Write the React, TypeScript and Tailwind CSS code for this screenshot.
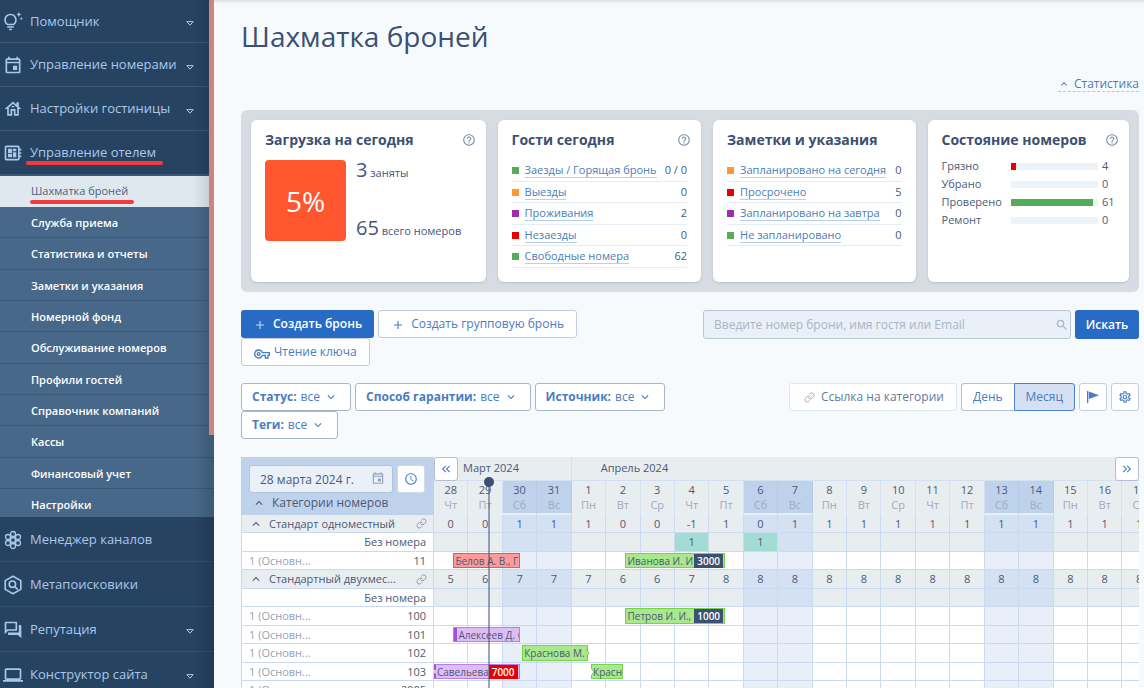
import type { ReactNode } from "react";
import {
  MdAccessTime,
  MdAdd,
  MdHelpOutline,
  MdKeyboardArrowDown,
  MdKeyboardArrowUp,
  MdKeyboardDoubleArrowLeft,
  MdKeyboardDoubleArrowRight,
  MdLaptop,
  MdOutlineDeveloperBoard,
  MdOutlineEvent,
  MdOutlineHouse,
  MdOutlineQuestionAnswer,
  MdOutlineSettings,
  MdOutlineTipsAndUpdates,
  MdOutlineVpnKey,
  MdSearch,
} from "react-icons/md";
import { FiLink } from "react-icons/fi";

function FlowerIcon() {
  const petals = [
    [10, 4],
    [15, 7],
    [15, 13],
    [10, 16],
    [5, 13],
    [5, 7],
    [10, 10],
  ];
  return (
    <svg viewBox="0 0 20 20" className="size-5" fill="none" stroke="currentColor" strokeWidth="1.3">
      {petals.map(([cx, cy]) => (
        <circle key={`${cx}-${cy}`} cx={cx} cy={cy} r="2.5" />
      ))}
    </svg>
  );
}

function HexSearchIcon() {
  return (
    <svg viewBox="0 0 20 20" className="size-5" fill="none" stroke="currentColor" strokeWidth="1.6">
      <path d="M10 1.2 17.8 5.6v8.8L10 18.8 2.2 14.4V5.6z" strokeLinejoin="round" />
      <circle cx="9.4" cy="9.2" r="3.2" />
      <path d="m11.8 11.6 3 3" />
    </svg>
  );
}

function FlagIcon() {
  return (
    <svg viewBox="0 0 14 14" className="size-3.5" fill="currentColor">
      <path d="M1 1h1.3v12H1z" />
      <path d="M2.8 1.5 13 5.2 2.8 9z" />
    </svg>
  );
}

function MenuArrow() {
  return (
    <svg viewBox="0 0 8 5" className="mt-1 h-[5px] w-2" fill="none" stroke="currentColor">
      <path d="M.8.6h6.4L4 4.2z" />
    </svg>
  );
}

type MenuItem = { label: string; icon: ReactNode; arrow?: boolean; marked?: boolean };

const topMenu: MenuItem[] = [
  { label: "Помощник", icon: <MdOutlineTipsAndUpdates />, arrow: true },
  { label: "Управление номерами", icon: <MdOutlineEvent />, arrow: true },
  { label: "Настройки гостиницы", icon: <MdOutlineHouse />, arrow: true },
  { label: "Управление отелем", icon: <MdOutlineDeveloperBoard />, marked: true },
];

const subMenu = [
  "Служба приема",
  "Статистика и отчеты",
  "Заметки и указания",
  "Номерной фонд",
  "Обслуживание номеров",
  "Профили гостей",
  "Справочник компаний",
  "Кассы",
  "Финансовый учет",
  "Настройки",
];

const bottomMenu: MenuItem[] = [
  { label: "Менеджер каналов", icon: <FlowerIcon /> },
  { label: "Метапоисковики", icon: <HexSearchIcon /> },
  { label: "Репутация", icon: <MdOutlineQuestionAnswer />, arrow: true },
  { label: "Конструктор сайта", icon: <MdLaptop />, arrow: true },
];

function MenuLink({ item }: { item: MenuItem }) {
  return (
    <a href="#" className="flex h-full items-center pt-px pr-5 pl-[3px] text-[#a9c8ea]">
      <span className="w-[27px] text-xl">{item.icon}</span>
      <span className="relative flex-1 text-[13px] whitespace-nowrap">
        {item.label}
        {item.marked && (
          <span className="absolute -bottom-0.5 -left-1 h-1 w-[137px] rounded-full bg-[#f23b3b]" />
        )}
      </span>
      {item.arrow && <MenuArrow />}
    </a>
  );
}

function Sidebar() {
  return (
    <nav className="relative w-[214px] shrink-0 overflow-hidden bg-[#274362]">
      <ul>
        {topMenu.map((item) => (
          <li key={item.label} className="h-11 border-b border-[#3a5778] first:h-[43px]">
            <MenuLink item={item} />
          </li>
        ))}
      </ul>
      <ul className="-mb-[3px] border-t border-[#3a5778] bg-[#476888] text-[11px] font-semibold text-white">
        <li className="h-[31px] bg-[#e0e8ef] font-normal text-[#4f5f7c]">
          <a href="#" className="flex h-full items-center pl-[31px]">
            <span className="relative">
              Шахматка броней
              <span className="absolute -bottom-1 -left-px h-1 w-[104px] rounded-full bg-[#f23b3b]" />
            </span>
          </a>
        </li>
        {subMenu.map((label) => (
          <li key={label} className="h-[31px] border-b border-[#3a5a7b] nth-[3n]:h-8">
            <a href="#" className="flex h-full items-center pt-0.5 pl-[31px]">
              {label}
            </a>
          </li>
        ))}
      </ul>
      <ul className="relative bg-[#274362]">
        {bottomMenu.map((item) => (
          <li key={item.label} className="h-[45px] border-b border-[#32506f]">
            <MenuLink item={item} />
          </li>
        ))}
      </ul>
      <div className="absolute inset-y-0 right-0 w-5 bg-linear-to-r from-transparent to-black/15" />
      <div className="absolute top-0 right-0 h-[435px] w-[5px] bg-[#cd847f]" />
    </nav>
  );
}

function Card({ title, help, children }: { title: string; help?: boolean; children: ReactNode }) {
  return (
    <section className="h-[162px] rounded-md bg-white px-3.5 pt-[11px] shadow-sm">
      <div className="flex h-[18px] items-center justify-between">
        <h2 className="text-sm font-bold whitespace-nowrap text-[#3b5072]">{title}</h2>
        {help && (
          <button aria-label="Справка" className="-mr-1 text-sm text-[#7d93b0]">
            <MdHelpOutline />
          </button>
        )}
      </div>
      {children}
    </section>
  );
}

type Stat = [color: string, label: string, value: string];

const guests: Stat[] = [
  ["bg-[#54ab5a]", "Заезды / Горящая бронь", "0 / 0"],
  ["bg-[#ff982e]", "Выезды", "0"],
  ["bg-[#9c2fae]", "Проживания", "2"],
  ["bg-[#eb0000]", "Незаезды", "0"],
  ["bg-[#54ab5a]", "Свободные номера", "62"],
];

const notes: Stat[] = [
  ["bg-[#ff982e]", "Запланировано на сегодня", "0"],
  ["bg-[#eb0000]", "Просрочено", "5"],
  ["bg-[#9c2fae]", "Запланировано на завтра", "0"],
  ["bg-[#54ab5a]", "Не запланировано", "0"],
];

function StatList({ items }: { items: Stat[] }) {
  return (
    <ul className="mt-[11px] text-[11px] text-[#4a5a78]">
      {items.map(([color, label, value]) => (
        <li key={label} className="flex h-[22px] items-center border-b border-[#e4edf6] even:h-[21px]">
          <span className={`mr-1.5 size-[7px] ${color}`} />
          <a href="#" className="border-b border-[#b4d0ec] leading-[14px] whitespace-nowrap text-[#4a7db8]">
            {label}
          </a>
          <span className="ml-auto whitespace-nowrap">{value}</span>
        </li>
      ))}
    </ul>
  );
}

const roomStates = [
  { label: "Грязно", value: 4, width: 6, color: "bg-[#eb0000]" },
  { label: "Убрано", value: 0, width: 0, color: "" },
  { label: "Проверено", value: 61, width: 94, color: "bg-[#54ab5a]" },
  { label: "Ремонт", value: 0, width: 0, color: "" },
];

function Statistics() {
  return (
    <div className="grid grid-cols-[234fr_203fr_202fr_201fr] gap-3 rounded-md bg-[#d7dce3] p-2.5">
      <Card title="Загрузка на сегодня" help>
        <div className="mt-[11px] flex h-[81px] gap-2.5 text-[#45567a]">
          <div className="flex w-[81px] items-center justify-center rounded bg-[#ff5630] text-[28px] text-white">
            5%
          </div>
          <div className="flex flex-col justify-between text-[11px]">
            <p className="leading-5">
              <span className="text-xl leading-5">3</span> заняты
            </p>
            <p className="leading-5">
              <span className="text-xl leading-5">65</span> всего номеров
            </p>
          </div>
        </div>
      </Card>
      <Card title="Гости сегодня" help>
        <StatList items={guests} />
      </Card>
      <Card title="Заметки и указания">
        <StatList items={notes} />
      </Card>
      <Card title="Состояние номеров" help>
        <ul className="mt-2 text-[11px] text-[#4a5a78]">
          {roomStates.map((s) => (
            <li key={s.label} className="flex h-[18px] items-center">
              <span className="w-[69px]">{s.label}</span>
              <span className="h-[7px] flex-1 bg-[#edf3f6]">
                <span className={`block h-full ${s.color}`} style={{ width: `${s.width}%` }} />
              </span>
              <span className="w-[17px] pl-1">{s.value}</span>
            </li>
          ))}
        </ul>
      </Card>
    </div>
  );
}

const outline = "flex h-7 items-center rounded-[3px] border border-[#c3cddc] bg-white text-[#4a7cc4]";

function ActionBar() {
  return (
    <div className="mt-[18px] flex items-start text-xs">
      <div className="flex flex-1 flex-wrap gap-x-1">
        <button className="flex h-7 items-center rounded-[3px] bg-[#276bc4] px-3 font-semibold text-white">
          <MdAdd className="mt-0.5 mr-1.5 text-sm opacity-70" />
          Создать бронь
        </button>
        <button className={`${outline} px-3`}>
          <MdAdd className="mt-0.5 mr-1.5 text-sm" />
          Создать групповую бронь
        </button>
        <button className={`${outline} px-3`}>
          <MdOutlineVpnKey className="mt-1 mr-1 text-base" />
          Чтение ключа
        </button>
      </div>
      <form className="flex w-[436px] shrink-0 gap-1">
        <div className="relative flex-1">
          <input
            type="search"
            aria-label="Поиск брони"
            placeholder="Введите номер брони, имя гостя или Email"
            className="h-[29px] w-full rounded-[3px] border border-[#b9c6d6] bg-[#e9f0f8] px-2.5 placeholder:text-[#a9b5c6]"
          />
          <MdSearch className="absolute top-2 right-0.5 text-sm text-[#a9b5c6]" />
        </div>
        <button type="button" className="h-[29px] w-16 rounded-[3px] bg-[#276bc4] font-semibold text-white">
          Искать
        </button>
      </form>
    </div>
  );
}

function FilterBar() {
  return (
    <div className="mt-[17px] flex items-start text-xs">
      <div className="flex flex-1 flex-wrap gap-x-1 pr-12">
        {["Статус:", "Способ гарантии:", "Источник:", "Теги:"].map((name) => (
          <label
            key={name}
            className="flex h-7 items-center rounded-[3px] border border-[#a9b6c8] bg-white pr-3 pl-2.5 text-[#4a7cc4]"
          >
            <span className="mr-1 font-bold">{name}</span>
            <select className="field-sizing-content appearance-none">
              <option>все</option>
            </select>
            <MdKeyboardArrowDown className="ml-1 text-sm" />
          </label>
        ))}
      </div>
      <div className="flex gap-1">
        <button className="flex h-7 items-center rounded-[3px] border border-[#e0e6ee] bg-white px-3 text-[#68799a]">
          <FiLink className="mr-1.5 ml-0.5 text-[11px] text-[#9ba8ba]" />
          Ссылка на категории
        </button>
        <div className="flex">
          <button className="h-7 rounded-l-[3px] border border-r-0 border-[#b5c0d0] bg-white px-[11px] text-[#4a7cc4]">
            День
          </button>
          <button className="h-7 rounded-r-[3px] border border-[#4a82d0] bg-[#d5e1f3] px-[11px] text-[#4a7cc4]">
            Месяц
          </button>
        </div>
        <button aria-label="Флаг" className={`${outline} w-7 justify-center`}>
          <FlagIcon />
        </button>
        <button aria-label="Настройки" className={`${outline} w-7 justify-center text-sm`}>
          <MdOutlineSettings />
        </button>
      </div>
    </div>
  );
}

const weekdays = ["Чт", "Пт", "Сб", "Вс", "Пн", "Вт", "Ср"];
const days = Array.from({ length: 21 }, (_, i) => ({
  date: i < 4 ? 28 + i : i - 3,
  weekday: weekdays[i % 7],
  weekend: i % 7 === 2 || i % 7 === 3,
}));

// offset and length are percentages of one day column
type Booking = {
  start: number;
  offset: number;
  length: number;
  guest: string;
  kind: "red" | "green" | "purple";
  badge?: string;
  debt?: boolean;
  edge?: "strip" | "dashed" | "arrow" | "notch";
};

type Row =
  | { type: "group"; name: string; free: number[] }
  | { type: "unassigned"; counts: Record<number, number> }
  | { type: "room"; room: string; bookings: Booking[] };

const rows: Row[] = [
  {
    type: "group",
    name: "Стандарт одноместный",
    free: [0, 0, 1, 1, 1, 0, 0, -1, 1, 0, 1, 1, 1, 1, 1, 1, 1, 1, 1, 1, 1],
  },
  { type: "unassigned", counts: { 7: 1, 9: 1 } },
  {
    type: "room",
    room: "11",
    bookings: [
      { start: 0, offset: 58, length: 198, guest: "Белов А. В., Г", kind: "red" },
      { start: 5, offset: 58, length: 298, guest: "Иванова И. И", kind: "green", badge: "3000" },
    ],
  },
  {
    type: "group",
    name: "Стандартный двухмес...",
    free: [5, 6, 7, 7, 7, 6, 6, 7, 8, 8, 8, 8, 8, 8, 8, 8, 8, 8, 8, 8, 8],
  },
  { type: "unassigned", counts: {} },
  {
    type: "room",
    room: "100",
    bookings: [{ start: 5, offset: 58, length: 298, guest: "Петров И. И.,", kind: "green", badge: "1000" }],
  },
  {
    type: "room",
    room: "101",
    bookings: [{ start: 0, offset: 58, length: 198, guest: "Алексеев Д. С", kind: "purple", edge: "strip" }],
  },
  {
    type: "room",
    room: "102",
    bookings: [{ start: 2, offset: 58, length: 198, guest: "Краснова М.", kind: "green", edge: "arrow" }],
  },
  {
    type: "room",
    room: "103",
    bookings: [
      {
        start: 0,
        offset: 0,
        length: 256,
        guest: "Савельева",
        kind: "purple",
        badge: "7000",
        debt: true,
        edge: "dashed",
      },
      { start: 4, offset: 58, length: 96, guest: "Красн", kind: "green", edge: "notch" },
    ],
  },
  { type: "room", room: "2005", bookings: [] },
];

const kinds = {
  red: "border-[#fb5050] bg-[#ff9a9a]",
  green: "border-[#77d24c] bg-[#a9e88c]",
  purple: "border-[#bb7bea] bg-[#dfbcf5]",
};

function BookingBar({ booking }: { booking: Booking }) {
  const { offset, length, guest, kind, badge, debt, edge } = booking;
  return (
    <button
      className={`absolute inset-y-px z-10 flex items-center border ${kinds[kind]} ${edge === "dashed" ? "border-l-2 border-l-[#a352de] [border-left-style:dashed]" : ""}`}
      style={{ left: `${offset}%`, width: `${length}%` }}
    >
      {edge === "strip" && <span className="h-full w-[3px] shrink-0 bg-[#a44de3]" />}
      <span className="min-w-0 flex-1 overflow-hidden pl-px text-left text-[10px] leading-[14px] whitespace-nowrap text-[#4a5a78]">
        {guest}
      </span>
      {badge && (
        <span
          className={`mr-px px-[3px] text-[10px] leading-[14px] font-semibold text-white ${debt ? "bg-[#e80000]" : "bg-[#3b5072]"}`}
        >
          {badge}
        </span>
      )}
      {edge === "arrow" && (
        <svg viewBox="0 0 4 8" className="absolute top-[3px] -right-[3px] h-2 w-1" fill="#a9e88c" stroke="#77d24c">
          <path d="M0 0 3 4 0 8" />
        </svg>
      )}
      {edge === "notch" && (
        <svg viewBox="0 0 4 8" className="absolute top-[3px] -left-px h-2 w-1" fill="#ffffff" stroke="#77d24c">
          <path d="M0 0 3 4 0 8" />
        </svg>
      )}
    </button>
  );
}

function cellColor(row: Row, day: number) {
  const { weekend } = days[day];
  if (row.type === "unassigned" && row.counts[day]) return "bg-[#a3dcd4]";
  if (row.type === "room") return weekend ? "bg-[#e8eff9]" : "bg-white";
  return weekend ? "bg-[#d4e1f3]" : "bg-[#e8edef]";
}

function RowTitle({ row }: { row: Row }) {
  if (row.type === "group") {
    return (
      <div className="flex items-center pr-1.5 pl-[7px] text-[#4a5a78]">
        <MdKeyboardArrowUp className="mr-1.5 text-sm" />
        {row.name}
        <FiLink className="ml-auto text-[11px] text-[#8996ac]" />
      </div>
    );
  }
  if (row.type === "unassigned") return <div className="pr-[7px] text-right text-[#4a5a78]">Без номера</div>;
  return (
    <div className="flex justify-between px-[7px]">
      <span className="text-[#94a2b8]">1 (Основн...</span>
      <span className="text-[#4a5a78]">{row.room}</span>
    </div>
  );
}

function Calendar() {
  return (
    <div className="relative mt-[18px] overflow-hidden text-[11px]">
      <table className="w-[calc(100%+18px)] table-fixed border-separate border-spacing-0 text-center text-[#4a5a78]">
        <colgroup>
          <col className="w-[193px]" />
          {days.map((_, i) => (
            <col key={i} />
          ))}
        </colgroup>
        <thead>
          <tr className="h-6 bg-[#e8edef]">
            <th rowSpan={2} className="bg-[#bfd2ec] px-2 text-left align-top font-normal">
              <div className="mt-2 flex gap-1">
                <div className="relative w-[144px]">
                  <input
                    aria-label="Дата"
                    defaultValue="28 марта 2024 г."
                    className="h-7 w-full rounded-[3px] border border-[#b4c4dc] bg-[#e9f0f8] px-2.5 text-xs text-[#4a5a78]"
                  />
                  <MdOutlineEvent className="absolute top-1.5 right-2 text-sm text-[#94a2b8]" />
                </div>
                <button
                  aria-label="Сегодня"
                  className="flex size-7 items-center justify-center rounded-[3px] border border-[#cfdaea] bg-white text-sm text-[#4a82d0]"
                >
                  <MdAccessTime />
                </button>
              </div>
              <div className="flex items-center pl-[3px] text-xs leading-5">
                <MdKeyboardArrowUp className="mr-1.5 text-sm" />
                Категории номеров
              </div>
            </th>
            <th colSpan={4} className="border-r border-b border-[#d3e0f0] pl-[29px] text-left font-normal">
              Март 2024
            </th>
            <th colSpan={17} className="border-b border-[#d3e0f0] pl-[29px] text-left font-normal">
              Апрель 2024
            </th>
          </tr>
          <tr className="h-[34px]">
            {days.map((day, i) => (
              <th
                key={i}
                className={`relative border-r border-b-2 border-b-[#e6eef8] p-0 leading-[15px] font-normal ${day.weekend ? "border-r-[#b4cae8] bg-[#bfd2ec]" : "border-r-[#d3e0f0] bg-[#e8edef]"}`}
              >
                <div>{day.date}</div>
                <div className="text-[#9dabc0]">{day.weekday}</div>
                {i === 1 && (
                  <div className="absolute -top-1 right-2 z-20 size-2.5 rounded-full bg-[#3b5072]">
                    <div className="mx-auto h-screen w-0.5 bg-[#3b5072]/50" />
                  </div>
                )}
              </th>
            ))}
          </tr>
        </thead>
        <tbody>
          {rows.map((row, r) => (
            <tr key={r} className="odd:h-[18px] even:h-[19px]">
              <th
                className={`border-r border-b border-l border-[#cbdaf0] p-0 leading-4 font-normal whitespace-nowrap ${row.type === "group" ? "bg-[#e8edef]" : "bg-white"}`}
              >
                <RowTitle row={row} />
              </th>
              {days.map((_, d) => (
                <td key={d} className={`relative border-r border-b border-[#cbdaf0] p-0 leading-4 ${cellColor(row, d)}`}>
                  {row.type === "group" && row.free[d]}
                  {row.type === "unassigned" && row.counts[d]}
                  {row.type === "room" &&
                    row.bookings.filter((b) => b.start === d).map((b) => <BookingBar key={b.guest} booking={b} />)}
                </td>
              ))}
            </tr>
          ))}
        </tbody>
      </table>
      <button
        aria-label="Назад"
        className="absolute top-0 left-[193px] flex size-6 items-center justify-center rounded-[3px] border border-[#b4c0d0] bg-white text-sm text-[#4a82d0]"
      >
        <MdKeyboardDoubleArrowLeft />
      </button>
      <button
        aria-label="Вперед"
        className="absolute top-0 right-0 flex size-6 items-center justify-center rounded-[3px] border border-[#b4c0d0] bg-white text-sm text-[#4a82d0]"
      >
        <MdKeyboardDoubleArrowRight />
      </button>
    </div>
  );
}

export default function App() {
  return (
    <div className="flex h-screen overflow-hidden bg-[#f6fafd] font-['Open_Sans','Noto_Sans',sans-serif]">
      <Sidebar />
      <main className="relative min-w-0 flex-1 pr-[5px] pl-[27px]">
        <div className="absolute inset-x-0 top-0 h-1 bg-linear-to-b from-black/10 to-transparent" />
        <h1 className="pt-4 text-[28px] leading-10 text-[#3b5072]">Шахматка броней</h1>
        <div className="mt-5 mb-[18px] flex justify-end">
          <button className="flex h-4 items-center border-b border-dashed border-[#a9c8ea] text-xs text-[#4a7db8]">
            <MdKeyboardArrowUp className="mr-1 text-xs" />
            Статистика
          </button>
        </div>
        <Statistics />
        <ActionBar />
        <FilterBar />
        <Calendar />
      </main>
    </div>
  );
}
